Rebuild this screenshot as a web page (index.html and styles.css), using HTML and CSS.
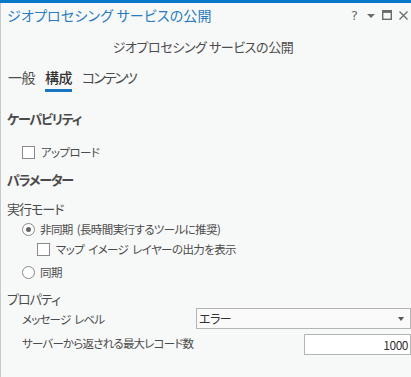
FILE: index.html
```html
<!DOCTYPE html>
<html lang="ja">
<head>
<meta charset="utf-8">
<link rel="stylesheet" href="styles.css">
</head>
<body>
<div class="accent"></div>
<div class="panel">
  <div class="titlebar">
    <div class="title">ジオプロセシング サービスの公開</div>
    <div class="win-icons">
      <span class="ic-help">?</span>
      <svg class="ic" width="8" height="5" viewBox="0 0 8 5"><path d="M0 1h8l-4 4z" fill="#6b6b6b"/></svg>
      <svg class="ic" width="10" height="10" viewBox="0 0 10 10"><rect x="0.7" y="0.7" width="8.6" height="8.6" fill="none" stroke="#6b6b6b" stroke-width="1.4"/><rect x="0.7" y="0.7" width="8.6" height="2.2" fill="#6b6b6b"/></svg>
      <svg class="ic" width="9" height="9" viewBox="0 0 9 9"><path d="M0.5 0.5L8.5 8.5M8.5 0.5L0.5 8.5" stroke="#6b6b6b" stroke-width="1.3"/></svg>
    </div>
  </div>
  <div class="subtitle">ジオプロセシング サービスの公開</div>
  <div class="tabs">
    <span class="tab">一般</span>
    <span class="tab active">構成</span>
    <span class="tab kana">コンテンツ</span>
  </div>

  <div class="section-h cap">ケーパビリティ</div>
  <label class="row indent1 up-row"><span class="cb"></span>アップロード</label>

  <div class="section-h param">パラメーター</div>
  <div class="sub-h mode">実行モード</div>
  <label class="row indent1 radio-row"><span class="rb on"></span>非同期 (長時間実行するツールに推奨)</label>
  <label class="row indent2"><span class="cb"></span>マップ イメージ レイヤーの出力を表示</label>
  <label class="row indent1 radio-row2"><span class="rb"></span>同期</label>

  <div class="sub-h prop">プロパティ</div>
  <div class="field">
    <span class="flabel">メッセージ レベル</span>
    <div class="select"><span>エラー</span><svg width="6" height="4" viewBox="0 0 6 4"><path d="M0 0h6l-3 4z" fill="#555"/></svg></div>
  </div>
  <div class="field field2">
    <span class="flabel">サーバーから返される最大レコード数</span>
    <div class="num">1000</div>
  </div>
</div>
</body>
</html>
```

FILE: styles.css
```css
* { box-sizing: border-box; }
html, body { margin: 0; padding: 0; }
body {
  width: 411px;
  height: 377px;
  overflow: hidden;
  background: #f7f8f8;
  font-family: "Noto Sans CJK JP", "Noto Sans", sans-serif;
  font-feature-settings: "palt";
  color: #4c4c4c;
  font-size: 12px;
}
.accent { height: 3px; background: #0a78c8; }
.panel {
  border-left: 1px solid #c9c9c9;
  height: 374px;
  padding-left: 6px;
}
.titlebar {
  display: flex;
  align-items: center;
  justify-content: space-between;
  height: 24px;
}
.title {
  color: #2a7bbf;
  font-size: 14px;
  letter-spacing: 0.2px;
  line-height: 22px;
}
.win-icons {
  display: flex;
  align-items: center;
  gap: 7px;
  padding-right: 3px;
}
.ic-help { font-family: "DejaVu Sans", sans-serif; font-size: 13px; color: #6b6b6b; margin-right: 2px; }
.subtitle {
  text-align: center;
  font-size: 13px;
  letter-spacing: -0.4px;
  margin-top: 10px;
  padding-right: 12px;
  height: 20px;
  line-height: 20px;
}
.tabs {
  display: flex;
  gap: 10px;
  margin-top: 11px;
  padding-left: 1px;
  font-size: 14px;
}
.tab { padding-bottom: 2px; border-bottom: 3px solid transparent; line-height: 19px; letter-spacing: -0.5px; }
.tab.kana { letter-spacing: -2px; }
.tab.active { border-bottom-color: #1a76c0; color: #333; font-weight: 500; }
.section-h {
  font-size: 13px;
  font-weight: 700;
  color: #4a4a4a;
  letter-spacing: -1.2px;
  line-height: 20px;
}
.cap { margin-top: 17px; }
.param { margin-top: 8px; }
.sub-h { font-size: 13px; line-height: 20px; letter-spacing: -1px; }
.mode { margin-top: 9px; }
.prop { margin-top: 7px; }
.row {
  display: flex;
  align-items: center;
  gap: 5px;
  font-size: 11.5px;
  letter-spacing: -0.6px;
  word-spacing: 2px;
  height: 20px;
}
.indent1 { padding-left: 15px; }
.indent2 { padding-left: 30px; }
.up-row { margin-top: 13px; }
.radio-row { margin-top: 0px; }
.radio-row2 { margin-top: 3px; }
.cb {
  width: 13px; height: 13px;
  border: 1px solid #8a8a8a;
  background: #fff;
  flex: none;
  margin-right: 1px;
}
.rb {
  width: 13px; height: 13px;
  border: 1px solid #8a8a8a;
  border-radius: 50%;
  background: #fff;
  flex: none;
  position: relative;
}
.rb.on::after {
  content: "";
  position: absolute;
  left: 3px; top: 3px;
  width: 5px; height: 5px;
  border-radius: 50%;
  background: #666;
}
.field {
  display: flex;
  align-items: center;
  justify-content: space-between;
  padding-left: 15px;
  margin-top: -1px;
  font-size: 11.5px;
  letter-spacing: -0.8px;
  word-spacing: 2px;
  height: 21px;
}
.field2 { margin-top: 5px; }
.select {
  width: 215px;
  height: 21px;
  border: 1px solid #b4b4b4;
  background: #fafafa;
  display: flex;
  align-items: center;
  justify-content: space-between;
  padding: 0 6px 0 2px;
  color: #333;
  font-size: 12px;
  letter-spacing: -0.5px;
}
.num {
  width: 107px;
  height: 21px;
  border: 1px solid #b4b4b4;
  background: #fff;
  text-align: right;
  padding-right: 2px;
  line-height: 19px;
  color: #333;
  font-size: 12px;
  letter-spacing: -0.5px;
}
.field2 .flabel { margin-top: -4px; }
```
